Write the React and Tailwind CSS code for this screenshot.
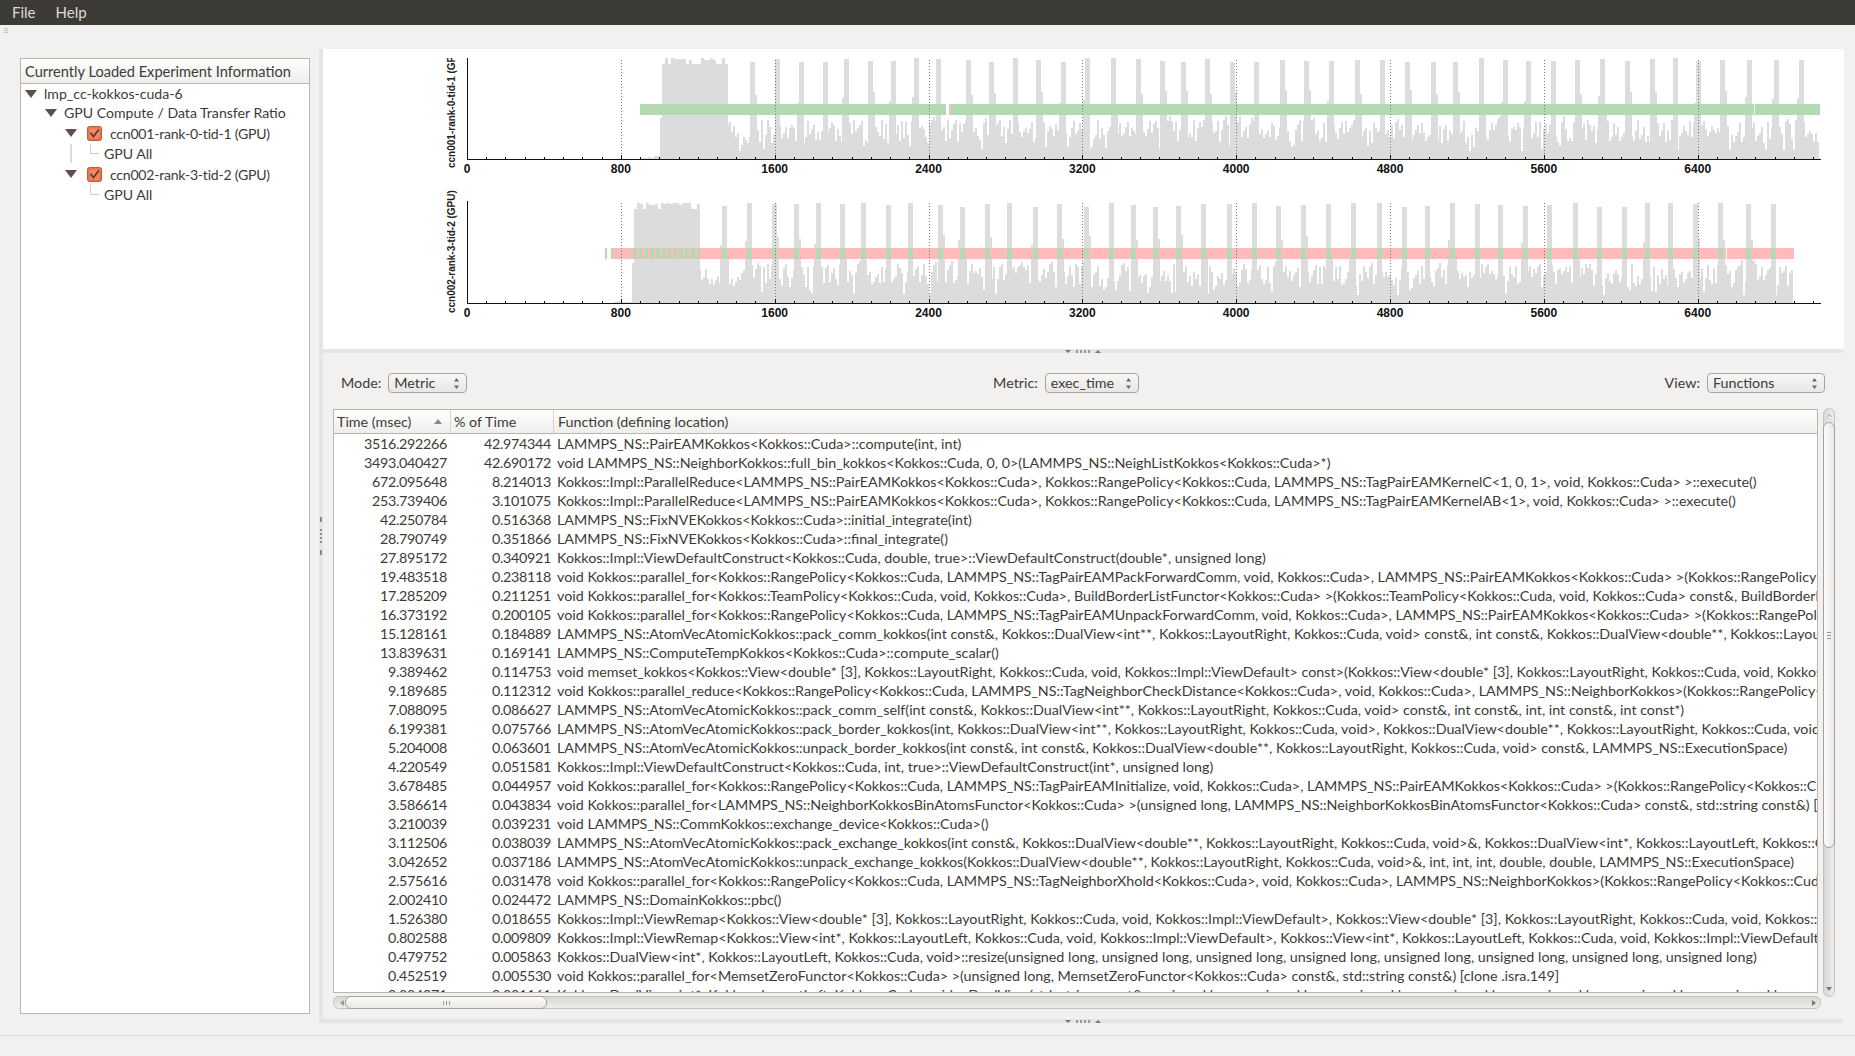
import { ChevronUp } from 'lucide-react';

const UI_FONT = 'font-["Lato","Noto_Sans",sans-serif]';

const ROWS = [
  ['3516.292266', '42.974344', 'LAMMPS_NS::PairEAMKokkos<Kokkos::Cuda>::compute(int, int)'],
  ['3493.040427', '42.690172', 'void LAMMPS_NS::NeighborKokkos::full_bin_kokkos<Kokkos::Cuda, 0, 0>(LAMMPS_NS::NeighListKokkos<Kokkos::Cuda>*)'],
  ['672.095648', '8.214013', 'Kokkos::Impl::ParallelReduce<LAMMPS_NS::PairEAMKokkos<Kokkos::Cuda>, Kokkos::RangePolicy<Kokkos::Cuda, LAMMPS_NS::TagPairEAMKernelC<1, 0, 1>, void, Kokkos::Cuda> >::execute()'],
  ['253.739406', '3.101075', 'Kokkos::Impl::ParallelReduce<LAMMPS_NS::PairEAMKokkos<Kokkos::Cuda>, Kokkos::RangePolicy<Kokkos::Cuda, LAMMPS_NS::TagPairEAMKernelAB<1>, void, Kokkos::Cuda> >::execute()'],
  ['42.250784', '0.516368', 'LAMMPS_NS::FixNVEKokkos<Kokkos::Cuda>::initial_integrate(int)'],
  ['28.790749', '0.351866', 'LAMMPS_NS::FixNVEKokkos<Kokkos::Cuda>::final_integrate()'],
  ['27.895172', '0.340921', 'Kokkos::Impl::ViewDefaultConstruct<Kokkos::Cuda, double, true>::ViewDefaultConstruct(double*, unsigned long)'],
  ['19.483518', '0.238118', 'void Kokkos::parallel_for<Kokkos::RangePolicy<Kokkos::Cuda, LAMMPS_NS::TagPairEAMPackForwardComm, void, Kokkos::Cuda>, LAMMPS_NS::PairEAMKokkos<Kokkos::Cuda> >(Kokkos::RangePolicy<Kokkos::Cuda, void> const&)'],
  ['17.285209', '0.211251', 'void Kokkos::parallel_for<Kokkos::TeamPolicy<Kokkos::Cuda, void, Kokkos::Cuda>, BuildBorderListFunctor<Kokkos::Cuda> >(Kokkos::TeamPolicy<Kokkos::Cuda, void, Kokkos::Cuda> const&, BuildBorderListFunctor<Kokkos::Cuda> const&)'],
  ['16.373192', '0.200105', 'void Kokkos::parallel_for<Kokkos::RangePolicy<Kokkos::Cuda, LAMMPS_NS::TagPairEAMUnpackForwardComm, void, Kokkos::Cuda>, LAMMPS_NS::PairEAMKokkos<Kokkos::Cuda> >(Kokkos::RangePolicy<Kokkos::Cuda, void> const&)'],
  ['15.128161', '0.184889', 'LAMMPS_NS::AtomVecAtomicKokkos::pack_comm_kokkos(int const&, Kokkos::DualView<int**, Kokkos::LayoutRight, Kokkos::Cuda, void> const&, int const&, Kokkos::DualView<double**, Kokkos::LayoutRight, Kokkos::Cuda, void> const&)'],
  ['13.839631', '0.169141', 'LAMMPS_NS::ComputeTempKokkos<Kokkos::Cuda>::compute_scalar()'],
  ['9.389462', '0.114753', 'void memset_kokkos<Kokkos::View<double* [3], Kokkos::LayoutRight, Kokkos::Cuda, void, Kokkos::Impl::ViewDefault> const>(Kokkos::View<double* [3], Kokkos::LayoutRight, Kokkos::Cuda, void, Kokkos::Impl::ViewDefault> const&)'],
  ['9.189685', '0.112312', 'void Kokkos::parallel_reduce<Kokkos::RangePolicy<Kokkos::Cuda, LAMMPS_NS::TagNeighborCheckDistance<Kokkos::Cuda>, void, Kokkos::Cuda>, LAMMPS_NS::NeighborKokkos>(Kokkos::RangePolicy<Kokkos::Cuda, void> const&)'],
  ['7.088095', '0.086627', 'LAMMPS_NS::AtomVecAtomicKokkos::pack_comm_self(int const&, Kokkos::DualView<int**, Kokkos::LayoutRight, Kokkos::Cuda, void> const&, int const&, int, int const&, int const*)'],
  ['6.199381', '0.075766', 'LAMMPS_NS::AtomVecAtomicKokkos::pack_border_kokkos(int, Kokkos::DualView<int**, Kokkos::LayoutRight, Kokkos::Cuda, void>, Kokkos::DualView<double**, Kokkos::LayoutRight, Kokkos::Cuda, void>, int, int)'],
  ['5.204008', '0.063601', 'LAMMPS_NS::AtomVecAtomicKokkos::unpack_border_kokkos(int const&, int const&, Kokkos::DualView<double**, Kokkos::LayoutRight, Kokkos::Cuda, void> const&, LAMMPS_NS::ExecutionSpace)'],
  ['4.220549', '0.051581', 'Kokkos::Impl::ViewDefaultConstruct<Kokkos::Cuda, int, true>::ViewDefaultConstruct(int*, unsigned long)'],
  ['3.678485', '0.044957', 'void Kokkos::parallel_for<Kokkos::RangePolicy<Kokkos::Cuda, LAMMPS_NS::TagPairEAMInitialize, void, Kokkos::Cuda>, LAMMPS_NS::PairEAMKokkos<Kokkos::Cuda> >(Kokkos::RangePolicy<Kokkos::Cuda, void> const&)'],
  ['3.586614', '0.043834', 'void Kokkos::parallel_for<LAMMPS_NS::NeighborKokkosBinAtomsFunctor<Kokkos::Cuda> >(unsigned long, LAMMPS_NS::NeighborKokkosBinAtomsFunctor<Kokkos::Cuda> const&, std::string const&) [clone .isra.150]'],
  ['3.210039', '0.039231', 'void LAMMPS_NS::CommKokkos::exchange_device<Kokkos::Cuda>()'],
  ['3.112506', '0.038039', 'LAMMPS_NS::AtomVecAtomicKokkos::pack_exchange_kokkos(int const&, Kokkos::DualView<double**, Kokkos::LayoutRight, Kokkos::Cuda, void>&, Kokkos::DualView<int*, Kokkos::LayoutLeft, Kokkos::Cuda, void>&)'],
  ['3.042652', '0.037186', 'LAMMPS_NS::AtomVecAtomicKokkos::unpack_exchange_kokkos(Kokkos::DualView<double**, Kokkos::LayoutRight, Kokkos::Cuda, void>&, int, int, int, double, double, LAMMPS_NS::ExecutionSpace)'],
  ['2.575616', '0.031478', 'void Kokkos::parallel_for<Kokkos::RangePolicy<Kokkos::Cuda, LAMMPS_NS::TagNeighborXhold<Kokkos::Cuda>, void, Kokkos::Cuda>, LAMMPS_NS::NeighborKokkos>(Kokkos::RangePolicy<Kokkos::Cuda, void> const&)'],
  ['2.002410', '0.024472', 'LAMMPS_NS::DomainKokkos::pbc()'],
  ['1.526380', '0.018655', 'Kokkos::Impl::ViewRemap<Kokkos::View<double* [3], Kokkos::LayoutRight, Kokkos::Cuda, void, Kokkos::Impl::ViewDefault>, Kokkos::View<double* [3], Kokkos::LayoutRight, Kokkos::Cuda, void, Kokkos::Impl::ViewDefault> >'],
  ['0.802588', '0.009809', 'Kokkos::Impl::ViewRemap<Kokkos::View<int*, Kokkos::LayoutLeft, Kokkos::Cuda, void, Kokkos::Impl::ViewDefault>, Kokkos::View<int*, Kokkos::LayoutLeft, Kokkos::Cuda, void, Kokkos::Impl::ViewDefault> >'],
  ['0.479752', '0.005863', 'Kokkos::DualView<int*, Kokkos::LayoutLeft, Kokkos::Cuda, void>::resize(unsigned long, unsigned long, unsigned long, unsigned long, unsigned long, unsigned long, unsigned long, unsigned long)'],
  ['0.452519', '0.005530', 'void Kokkos::parallel_for<MemsetZeroFunctor<Kokkos::Cuda> >(unsigned long, MemsetZeroFunctor<Kokkos::Cuda> const&, std::string const&) [clone .isra.149]'],
  ['0.094971', '0.001161', 'Kokkos::DualView<int*, Kokkos::LayoutLeft, Kokkos::Cuda, void>::DualView(std::string const&, unsigned long, unsigned long, unsigned long, unsigned long, unsigned long, unsigned long, unsigned long, unsigned long)'],
];

const SPIKES_1 = [752, 777, 801, 825, 846, 870, 893, 916, 938, 968, 991, 1015, 1038, 1063, 1087, 1113, 1138, 1162, 1183, 1207, 1232, 1256, 1282, 1306, 1331, 1357, 1382, 1407, 1433, 1455, 1481, 1505, 1528, 1553, 1577, 1602, 1627, 1652, 1675, 1698, 1722, 1749, 1776, 1801];
const SPIKES_2 = [724, 749, 774, 796, 818, 842, 863, 888, 910, 940, 962, 987, 1009, 1035, 1059, 1086, 1111, 1133, 1155, 1178, 1203, 1229, 1254, 1278, 1303, 1328, 1353, 1379, 1404, 1427, 1452, 1477, 1500, 1525, 1549, 1575, 1599, 1624, 1647, 1670, 1695, 1720, 1748, 1773];

const MAJOR = [0, 800, 1600, 2400, 3200, 4000, 4800, 5600, 6400];
const xOf = (t) => 467 + t * 0.1923;

function makeBars({ seed, start, end, blockStart, blockEnd, spikes, top, base }) {
  let s = seed;
  const rnd = () => {
    s = (s * 1664525 + 1013904223) % 4294967296;
    return s / 4294967296;
  };
  let d = '';
  const col = (x, w, y) => {
    d += `M${x} ${y}h${w}V${base}h${-w}z`;
  };
  for (let x = start - 18; x < start; x += 3) col(x, 3, base - 1 - Math.floor(rnd() * 3));
  for (let x = start; x < blockStart; x += 2) col(x, 2, top + 60);
  for (let x = blockStart; x < blockEnd; x += 3) col(x, 3, top + (rnd() < 0.35 ? 6 : Math.floor(rnd() * 3)));
  let last = 0;
  for (let x = blockEnd; x < end; x += 2) {
    const r = rnd();
    let h = 16 + Math.floor(rnd() * 24);
    if (r < 0.06) h = 8 + Math.floor(rnd() * 6);
    if (Math.abs(h - last) < 3) h += 4;
    last = h;
    col(x, 2, base - h);
  }
  spikes.forEach((c, i) => {
    col(c - 2, 5, top + Math.floor(rnd() * 5));
    const sh = rnd();
    if (sh < 0.35) col(c + 3, 2, top + 32 + Math.floor(rnd() * 6));
    else if (sh < 0.6) col(c - 4, 2, top + 36 + Math.floor(rnd() * 10));
    if (i % 5 === 0) col(c + 3, 2, top + 55);
  });
  return d;
}

function Chart({ label, clipId, offsetY, height, top, base, labelY, clipTop, bars, strip }) {
  const ticks = [];
  for (let t = 0; t <= 7000; t += 100) ticks.push(t);
  return (
    <svg width="1520" height={height} className="block" fontFamily='"Liberation Sans", sans-serif'>
      <defs>
        <clipPath id={clipId}>
          <rect x="440" y={clipTop} width="26" height="140" />
        </clipPath>
      </defs>
      <g transform={`translate(-323,${-offsetY})`}>
        <path d={bars} fill="#dcdcdc" shapeRendering="crispEdges" />
        {strip}
        {MAJOR.slice(1).map((t) => (
          <line key={t} x1={Math.round(xOf(t)) + 0.5} x2={Math.round(xOf(t)) + 0.5} y1={top + 2} y2={base} stroke="#777" strokeDasharray="1 2" />
        ))}
        <line x1="467.5" x2="467.5" y1={top} y2={base + 1} stroke="#111" strokeWidth="1" />
        <line x1="467" x2="1821" y1={base + 0.5} y2={base + 0.5} stroke="#111" strokeWidth="1.2" />
        {ticks.map((t) => (
          <line key={t} x1={Math.round(xOf(t)) + 0.5} x2={Math.round(xOf(t)) + 0.5} y1={base - (t % 800 === 0 ? 4 : 2)} y2={base} stroke="#111" />
        ))}
        {MAJOR.map((t) => (
          <text key={t} x={xOf(t)} y={base + 14} textAnchor="middle" fontSize="12" fontWeight="700" fill="#111">
            {t}
          </text>
        ))}
        <g clipPath={`url(#${clipId})`}>
          <text transform={`translate(455,${labelY}) rotate(-90)`} fontSize="10" fontWeight="700" fill="#222">
            {label}
          </text>
        </g>
      </g>
    </svg>
  );
}

const GREEN = '#b3dbb3';
const PINK = '#ffbbbb';

function Strip1() {
  return (
    <g shapeRendering="crispEdges">
      <rect x="640" y="104" width="1180" height="11" fill={GREEN} />
      <rect x="650" y="104" width="1" height="11" fill={PINK} />
      <rect x="946" y="104" width="3" height="11" fill="#fff" />
      <rect x="949" y="104" width="2" height="11" fill={PINK} />
      <rect x="1754" y="104" width="1" height="11" fill="#e8f4e8" />
    </g>
  );
}

function Strip2() {
  const block = [];
  for (let x = 633; x < 699; x += 5.8) block.push(x);
  return (
    <g shapeRendering="crispEdges">
      <rect x="605" y="248" width="2" height="11" fill={GREEN} />
      <rect x="611" y="248" width="1183" height="11" fill={PINK} />
      <rect x="611" y="248" width="2" height="11" fill={GREEN} />
      {block.map((x) => (
        <rect key={x} x={x} y="248" width="3.5" height="11" fill={GREEN} />
      ))}
      {SPIKES_2.map((c) => (
        <rect key={c} x={c - 2} y="248" width="5" height="11" fill={GREEN} />
      ))}
      <rect x="1726" y="248" width="1" height="11" fill="#fff" />
    </g>
  );
}

const bars1 = makeBars({ seed: 11, start: 660, end: 1819, blockStart: 662, blockEnd: 727, spikes: SPIKES_1, top: 58, base: 159 });
const bars2 = makeBars({ seed: 37, start: 632, end: 1792, blockStart: 634, blockEnd: 699, spikes: SPIKES_2, top: 203, base: 303 });

function Arrow() {
  return (
    <svg width="12" height="8" viewBox="0 0 12 8" className="shrink-0">
      <path d="M0 0H12L6 8Z" fill="#5f4f4d" />
    </svg>
  );
}

function Check() {
  return (
    <svg width="15" height="15" viewBox="0 0 15 15" className="shrink-0 block">
      <rect x="0.5" y="0.5" width="14" height="14" rx="2" fill="#e8734a" stroke="#c85a33" />
      <rect x="2.5" y="2.5" width="10" height="10" rx="1" fill="#ee8a63" />
      <path d="M3.5 6.8 6.5 10.5 11.8 3.5" fill="none" stroke="#5b3a2c" strokeWidth="1.7" />
    </svg>
  );
}

function Tree() {
  return (
    <div className="text-[14.1px] leading-[19px] text-[#3c3b37] flex flex-col">
      <div className="h-[19px] flex items-center pl-[4px] gap-[7px]">
        <Arrow />
        <span>lmp_cc-kokkos-cuda-6</span>
      </div>
      <div className="h-[19px] flex items-center pl-[24px] gap-[7px]">
        <Arrow />
        <span>GPU Compute / Data Transfer Ratio</span>
      </div>
      <div className="h-[22px] flex items-center pl-[44px]">
        <Arrow />
        <span className="ml-[10px]"><Check /></span>
        <span className="ml-[8px] tracking-[-0.25px]">ccn001-rank-0-tid-1 (GPU)</span>
      </div>
      <div className="h-[19px] flex items-center relative pl-[83px]">
        <div className="absolute left-[49px] top-0 bottom-0 w-[2px] bg-[#dddbd8]" />
        <div className="absolute left-[69px] top-0 h-[10px] w-[9px] border-l border-b border-[#cfcdc9]" />
        <span>GPU All</span>
      </div>
      <div className="h-[22px] flex items-center pl-[44px]">
        <Arrow />
        <span className="ml-[10px]"><Check /></span>
        <span className="ml-[8px] tracking-[-0.25px]">ccn002-rank-3-tid-2 (GPU)</span>
      </div>
      <div className="h-[19px] flex items-center relative pl-[83px]">
        <div className="absolute left-[69px] top-0 h-[10px] w-[9px] border-l border-b border-[#cfcdc9]" />
        <span>GPU All</span>
      </div>
    </div>
  );
}

function Combo({ value, width }) {
  return (
    <div className={`${width} h-[20px] ml-[7px] rounded-[4px] border border-[#a8a5a0] bg-gradient-to-b from-[#f8f7f6] to-[#e8e7e5] flex items-center justify-between pl-[5px] pr-[6px] text-[14.3px] text-[#3c3b37]`}>
      <span className="leading-none">{value}</span>
      <svg width="7" height="13" viewBox="0 0 7 13">
        <path d="M3.5 1 6 4.5H1Z M3.5 12 1 8.5H6Z" fill="#6a6763" />
      </svg>
    </div>
  );
}

function Grip({ vertical }) {
  if (vertical) {
    return (
      <div className="absolute left-[-3px] top-[468px] h-[38px] w-[2px] flex flex-col items-center justify-between">
        <span className="h-[5px] w-[2px] bg-[#888]" />
        <span className="flex flex-col gap-[2px]">
          <span className="block h-[2px] w-[2px] bg-[#888]" />
          <span className="block h-[2px] w-[2px] bg-[#888]" />
          <span className="block h-[2px] w-[2px] bg-[#888]" />
          <span className="block h-[2px] w-[2px] bg-[#888]" />
        </span>
        <span className="h-[5px] w-[2px] bg-[#888]" />
      </div>
    );
  }
  return (
    <div className="h-full flex items-center justify-center gap-[5px] overflow-hidden">
      <svg width="6" height="3" viewBox="0 0 6 3"><path d="M0 0H6L3 3Z" fill="#777" /></svg>
      <span className="flex gap-[2px]">
        <span className="h-[3px] w-[2px] bg-[#999]" />
        <span className="h-[3px] w-[2px] bg-[#999]" />
        <span className="h-[3px] w-[2px] bg-[#999]" />
        <span className="h-[3px] w-[2px] bg-[#999]" />
      </span>
      <svg width="6" height="3" viewBox="0 0 6 3"><path d="M0 3H6L3 0Z" fill="#777" /></svg>
    </div>
  );
}

function ResultsTable() {
  return (
    <div className="h-[584px] w-[1485px] border border-[#b9b6b0] bg-white overflow-hidden text-[14.3px] text-[#3c3b37]">
      <div className="h-[24px] flex items-center border-b border-[#b9b6b0] bg-gradient-to-b from-[#ffffff] to-[#efeeec]">
        <div className="w-[117px] h-full flex items-center justify-between pl-[3px] pr-[8px] border-r border-[#d8d6d2]">
          <span>Time (msec)</span>
          <svg width="8" height="5" viewBox="0 0 8 5"><path d="M4 0 8 5H0Z" fill="#8a8782" /></svg>
        </div>
        <div className="w-[103px] h-full flex items-center pl-[3px] border-r border-[#d8d6d2]">% of Time</div>
        <div className="pl-[4px]">Function (defining location)</div>
      </div>
      {ROWS.map(([time, pct, fn]) => (
        <div key={time} className="h-[19px] leading-[19px] flex whitespace-nowrap">
          <div className="w-[113px] shrink-0 text-right tracking-[-0.3px]">{time}</div>
          <div className="w-[104px] shrink-0 text-right tracking-[-0.3px]">{pct}</div>
          <div className="pl-[6px]">{fn}</div>
        </div>
      ))}
    </div>
  );
}

function HScroll() {
  return (
    <div className="mt-[3px] h-[13px] w-[1488px] rounded-[6px] border border-[#c4c2be] bg-gradient-to-b from-[#d8d7d5] to-[#eeedeb] flex items-center relative">
      <svg width="4" height="6" viewBox="0 0 4 6" className="absolute left-[6px]"><path d="M4 0V6L0 3Z" fill="#999" /></svg>
      <div className="ml-[11px] w-[202px] h-[13px] rounded-[6px] border border-[#a5a29d] bg-gradient-to-b from-[#fbfbfa] to-[#e9e8e6] flex items-center justify-center gap-[1px]">
        <span className="h-[4px] w-px bg-[#999]" />
        <span className="h-[4px] w-px bg-[#999] ml-px" />
        <span className="h-[4px] w-px bg-[#999] ml-px" />
      </div>
      <svg width="4" height="6" viewBox="0 0 4 6" className="absolute right-[4px]"><path d="M0 0V6L4 3Z" fill="#777" /></svg>
    </div>
  );
}

function VScroll() {
  return (
    <div className="ml-[2px] -mt-px h-[589px] w-[12px] rounded-[6px] border border-[#c4c2be] bg-gradient-to-r from-[#d8d7d5] to-[#eeedeb] flex flex-col relative">
      <ChevronUp size={7} strokeWidth={3} className="absolute left-[2px] top-[3px] text-[#999]" />
      <div className="mt-[13px] h-[426px] -mx-px rounded-[6px] border border-[#a5a29d] bg-gradient-to-r from-[#fbfbfa] to-[#e9e8e6] flex flex-col items-center justify-center gap-[1px]">
        <span className="w-[4px] h-px bg-[#999]" />
        <span className="w-[4px] h-px bg-[#999] mt-px" />
        <span className="w-[4px] h-px bg-[#999] mt-px" />
      </div>
      <svg width="6" height="4" viewBox="0 0 6 4" className="absolute left-[2px] bottom-[5px]"><path d="M0 0H6L3 4Z" fill="#777" /></svg>
    </div>
  );
}

export default function App() {
  return (
    <div className={`${UI_FONT} w-[1855px] h-[1056px] overflow-hidden bg-[#f2f1f0] flex flex-col`}>
      <div className="h-[25px] bg-[#3c3b37] flex items-center pl-[12px] gap-[20px] text-[15px] text-[#dfdbd2]">
        <span>File</span>
        <span>Help</span>
      </div>
      <div className="h-[24px] pl-[4px] pt-[3px]">
        <div className="w-[4px] flex flex-col gap-[1px]">
          <span className="block h-px bg-[#c9c7c3]" />
          <span className="block h-px bg-[#c9c7c3]" />
          <span className="block h-px bg-[#c9c7c3]" />
        </div>
      </div>
      <div className="h-[974px] flex pl-[20px]">
        <div className="w-[290px] mt-[9px] h-[956px] border border-[#b9b6b0] bg-white text-[#3c3b37]">
          <div className="h-[25px] flex items-center pl-[4px] pt-[1px] text-[14.6px] border-b border-[#b9b6b0] bg-gradient-to-b from-[#ffffff] to-[#efeeec]">
            Currently Loaded Experiment Information
          </div>
          <Tree />
        </div>
        <div className="ml-[9px] w-[1525px] border-l-4 border-[#e5e5e5] flex flex-col relative">
          <Grip vertical />
          <div className="h-[300px] bg-white">
            <Chart label="ccn001-rank-0-tid-1 (GPU)" clipId="c1" offsetY={49} height={135} top={58} base={159} labelY={168} clipTop={58} bars={bars1} strip={<Strip1 />} />
            <Chart label="ccn002-rank-3-tid-2 (GPU)" clipId="c2" offsetY={184} height={165} top={201} base={303} labelY={313} clipTop={185} bars={bars2} strip={<Strip2 />} />
          </div>
          <div className="h-[4px] mr-px bg-[#e5e5e5]"><Grip /></div>
          <div className="h-[666px] pt-[20px] pl-[10px]">
            <div className="h-[20px] flex items-center justify-between pl-[8px] pr-[19px] text-[14.3px] text-[#3c3b37]">
              <div className="flex items-center"><span>Mode:</span><Combo value="Metric" width="w-[79px]" /></div>
              <div className="flex items-center"><span>Metric:</span><Combo value="exec_time" width="w-[94px]" /></div>
              <div className="flex items-center"><span>View:</span><Combo value="Functions" width="w-[118px]" /></div>
            </div>
            <div className="mt-[16px] flex">
              <div>
                <ResultsTable />
                <HScroll />
              </div>
              <VScroll />
            </div>
          </div>
          <div className="h-[4px] mr-px bg-[#e5e5e5]"><Grip /></div>
        </div>
      </div>
      <div className="h-[12px]" />
      <div className="flex-1 border-t border-[#dcdad6]" />
    </div>
  );
}
